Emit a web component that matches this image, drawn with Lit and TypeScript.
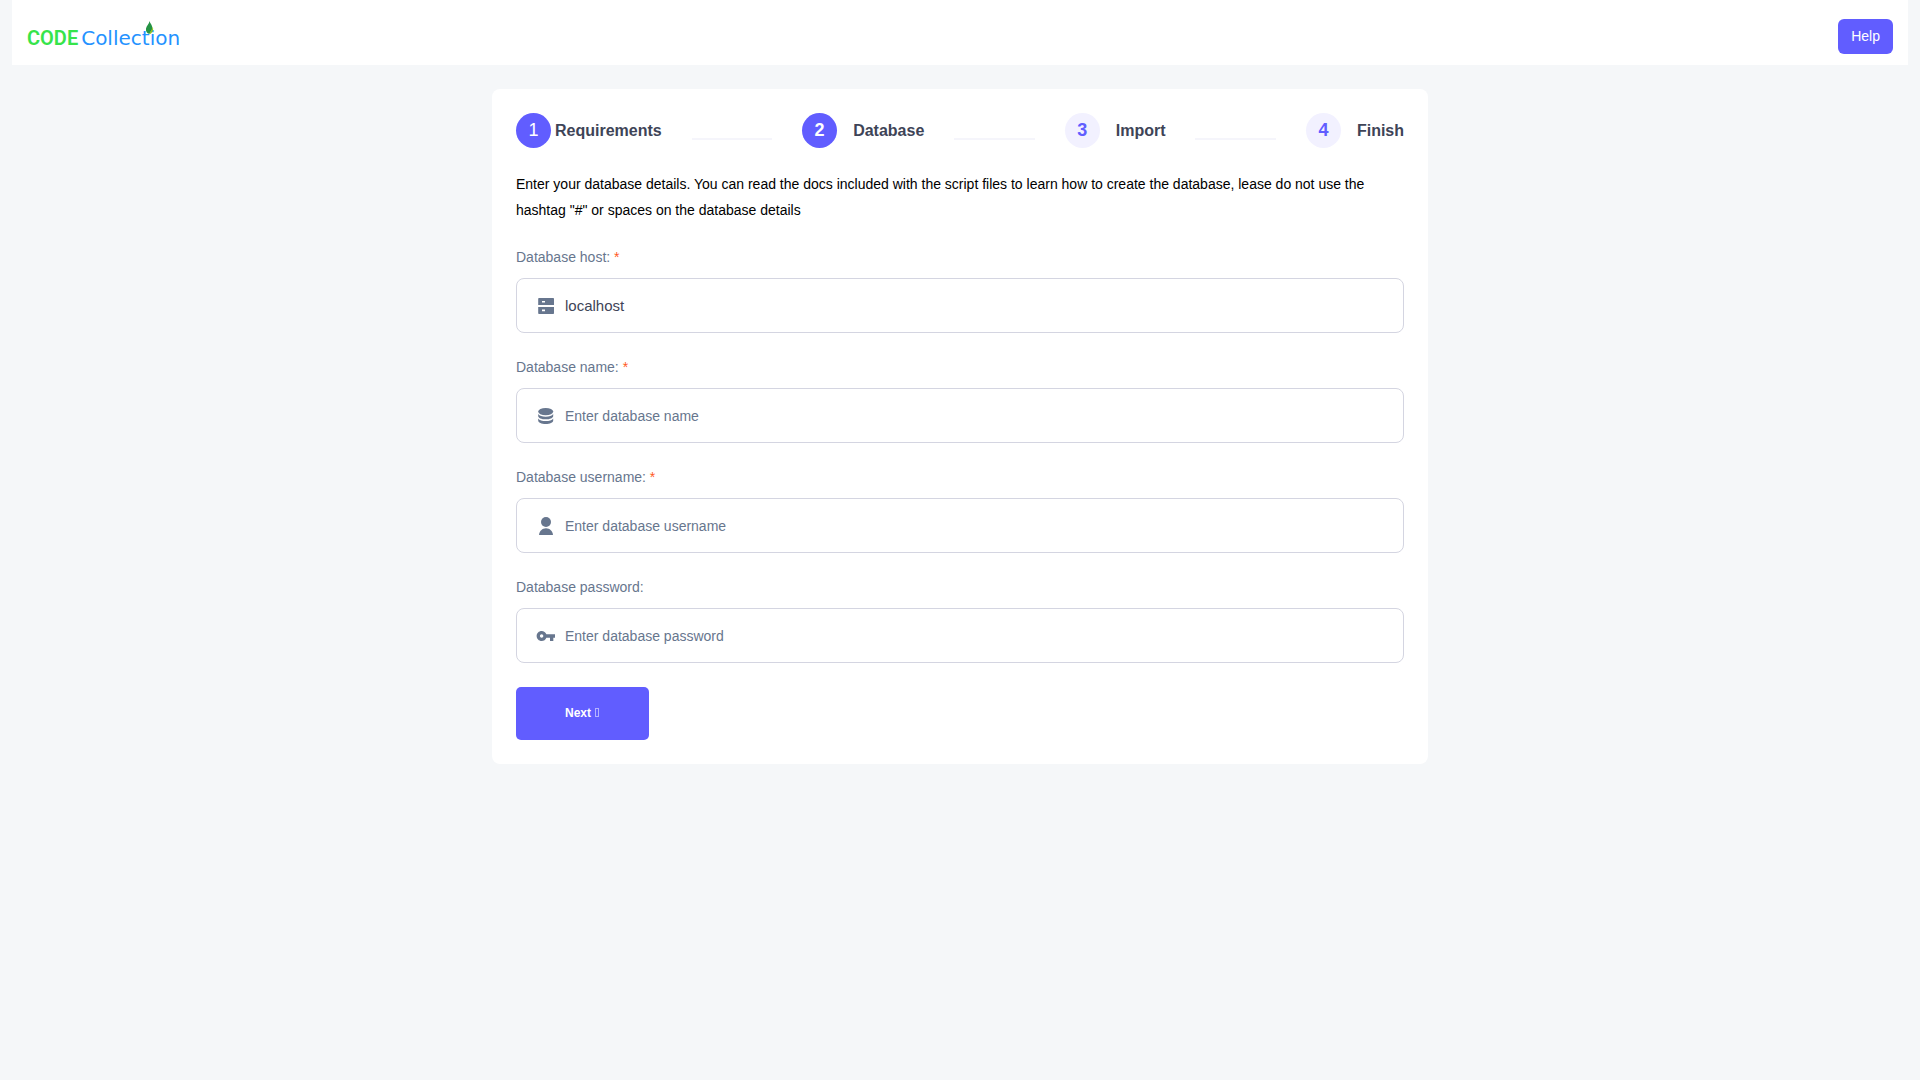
import { LitElement, html, css, svg, nothing } from "lit";
import { customElement } from "lit/decorators.js";

const icons = {
  server: svg`<path fill-rule="evenodd" d="M4 3h14.200q.8 0 .8.800V10H3.200V3.800Q3.200 3 4 3ZM7 6v1.600h3V6ZM3.200 12H19v6.200q0 .8-.8.800H4q-.8 0-.8-.8ZM7 14.600v1.600h3v-1.600Z"/>`,
  database: svg`<ellipse cx="10.700" cy="6.600" rx="7.500" ry="3.700"/><path d="M3.200 9v1.900c0 1.900 3.300 3.400 7.500 3.400s7.500-1.500 7.500-3.400V9c-1.200 1.800-4 2.800-7.500 2.800S4.400 10.800 3.200 9ZM3.200 13.400v2c0 2 3.300 3.500 7.500 3.500s7.500-1.500 7.500-3.500v-2c-1.200 1.800-4 2.700-7.500 2.700s-6.300-.9-7.500-2.700Z"/>`,
  user: svg`<circle cx="11" cy="7" r="5"/><path d="M4 20c.4-3.900 3.300-6.700 7-6.700s6.600 2.800 7 6.700Z"/>`,
  key: svg`<g transform="translate(.8 1) scale(.835)"><path d="M12.650 10C11.830 7.670 9.610 6 7 6c-3.310 0-6 2.690-6 6s2.690 6 6 6c2.610 0 4.830-1.670 5.650-4H17v4h4v-4h2v-4H12.650zM7 14c-1.100 0-2-.9-2-2s.9-2 2-2 2 .9 2 2-.9 2-2 2z"/></g>`,
};

interface Field {
  id: string;
  label: string;
  placeholder: string;
  value: string;
  required: boolean;
  type: string;
  icon: keyof typeof icons;
}

const fields: Field[] = [
  { id: "host", label: "Database host:", placeholder: "Enter database host", value: "localhost", required: true, type: "text", icon: "server" },
  { id: "name", label: "Database name:", placeholder: "Enter database name", value: "", required: true, type: "text", icon: "database" },
  { id: "username", label: "Database username:", placeholder: "Enter database username", value: "", required: true, type: "text", icon: "user" },
  { id: "password", label: "Database password:", placeholder: "Enter database password", value: "", required: false, type: "password", icon: "key" },
];

const steps = [
  { title: "Requirements", state: "done" },
  { title: "Database", state: "current" },
  { title: "Import", state: "upcoming" },
  { title: "Finish", state: "upcoming" },
];

@customElement("app-root")
export class AppRoot extends LitElement {
  static styles = css`
    :host {
      display: block;
      min-height: 100vh;
      background: #f5f7f9;
      color: #000;
      font-family: "Liberation Sans", Arial, sans-serif;
      font-size: 14px;
    }
    * {
      box-sizing: border-box;
    }
    .header {
      display: flex;
      align-items: center;
      justify-content: space-between;
      margin: 0 12px;
      padding: 19px 15px 11px;
      background: #fff;
    }
    .logo {
      position: relative;
      display: flex;
      align-items: baseline;
      gap: 3px;
      padding-top: 3px;
      font-size: 20px;
      line-height: 32px;
      text-decoration: none;
      white-space: nowrap;
    }
    .logo-code {
      color: #36e44b;
      font-family: Roboto, sans-serif;
      font-weight: 600;
    }
    .logo-name {
      color: #2492ff;
      font-family: "DejaVu Sans", sans-serif;
    }
    .leaf {
      position: absolute;
      left: 118px;
      top: 2px;
      width: 9px;
      height: 14px;
    }
    .help {
      padding: 0 13px;
      border: 0;
      border-radius: 6px;
      background: #615dff;
      color: #fff;
      font: 14px/35px "Liberation Sans", Arial, sans-serif;
    }
    .card {
      max-width: 936px;
      margin: 24px auto 0;
      padding: 24px;
      border-radius: 8px;
      background: #fff;
    }
    .steps {
      display: flex;
      justify-content: space-between;
      gap: 30px;
      margin: 0 0 23px;
      padding: 0;
      list-style: none;
    }
    .step {
      display: flex;
      align-items: center;
      gap: 16px;
      color: #3e4457;
      font-size: 16px;
      font-weight: 700;
      line-height: 35px;
    }
    .step.done {
      gap: 4px;
    }
    .line {
      flex: 1;
      height: 2px;
      margin-top: 25px;
      background: #f5f5fb;
    }
    .badge {
      width: 35px;
      border-radius: 50%;
      background: #f2f1ff;
      color: #615dff;
      font-size: 18px;
      text-align: center;
    }
    .done .badge,
    .current .badge {
      background: #615dff;
      color: #fff;
    }
    .done .badge {
      font-weight: 400;
    }
    .intro {
      margin: 0 0 24px;
      line-height: 26px;
    }
    .form {
      display: flex;
      flex-direction: column;
      align-items: flex-start;
      gap: 24px;
    }
    .field {
      display: flex;
      flex-direction: column;
      gap: 10px;
      width: 100%;
    }
    .label {
      color: #67768e;
      line-height: 21px;
    }
    .required {
      color: #ff5a1f;
    }
    .control {
      display: flex;
      align-items: center;
      gap: 8px;
      padding: 0 18px;
      border: 1px solid #d4d5e1;
      border-radius: 8px;
    }
    .icon {
      flex: none;
      width: 22px;
      height: 21px;
      fill: #67768e;
    }
    .input {
      flex: 1;
      min-width: 0;
      height: 53px;
      padding: 0;
      border: 0;
      outline: 0;
      background: none;
      color: #3e4457;
      font: 15px "Liberation Sans", Arial, sans-serif;
    }
    .input::placeholder {
      color: #67768e;
      font-size: 14px;
      opacity: 1;
    }
    .next {
      padding: 0 49px;
      border: 0;
      border-radius: 5px;
      background: #615dff;
      color: #fff;
      font: 700 12px/53px "Liberation Sans", Arial, sans-serif;
    }
    .arrow {
      display: inline-block;
      width: 4px;
      height: 9px;
      margin: 0 1px;
      border: 1px solid #b5b3ff;
    }
  `;

  render() {
    return html`
      <header class="header">
        <a class="logo" href="#">
          <span class="logo-code">CODE</span>
          <span class="logo-name">Collection</span>
          <svg class="leaf" viewBox="0 0 9 14" aria-hidden="true">
            <path fill="#259344" d="M4.500 0C5 2.300 7.600 4 7.300 7.500 7 10 5.200 10.800 4.400 13 1.800 12.300 .6 10.300 1 7.500 1.500 4.600 4.300 3 4.500 0Z" />
            <path fill="#8fc31f" d="M7.600 5.500c1.400 3-.1 6.700-3 7.700.1-2.900 2.800-3.900 3-7.700Z" />
          </svg>
        </a>
        <button class="help" type="button">Help</button>
      </header>
      <main class="card">
        <ol class="steps">
          ${steps.map(
            (step, i) => html`
              ${i ? html`<li class="line" role="presentation"></li>` : nothing}
              <li class="step ${step.state}">
                <span class="badge">${i + 1}</span>
                <span>${step.title}</span>
              </li>
            `
          )}
        </ol>
        <p class="intro">
          Enter your database details. You can read the docs included with the script files to learn how to create the
          database, lease do not use the hashtag "#" or spaces on the database details
        </p>
        <form class="form">
          ${fields.map(
            (field) => html`
              <div class="field">
                <label class="label" for=${field.id}>
                  ${field.label} ${field.required ? html`<span class="required">*</span>` : nothing}
                </label>
                <div class="control">
                  <svg class="icon" viewBox="0 0 22 21" aria-hidden="true">${icons[field.icon]}</svg>
                  <input
                    class="input"
                    id=${field.id}
                    type=${field.type}
                    placeholder=${field.placeholder}
                    .value=${field.value}
                    ?required=${field.required}
                  />
                </div>
              </div>
            `
          )}
          <button class="next" type="submit">Next <span class="arrow" aria-hidden="true"></span></button>
        </form>
      </main>
    `;
  }
}
